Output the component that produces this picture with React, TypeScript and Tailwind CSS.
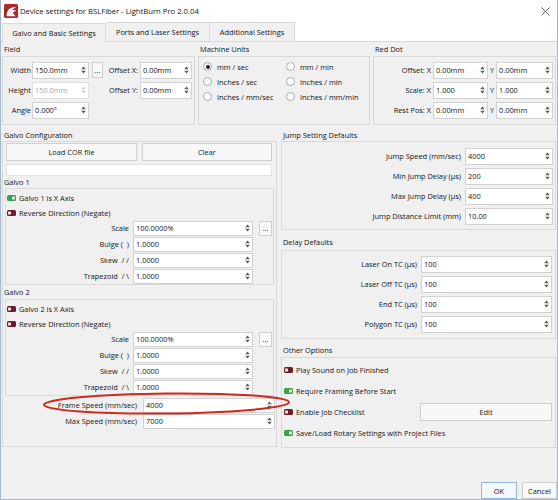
import React from "react";

const Spin = ({ dis }: { dis?: boolean }) => (
  <svg width="7" height="10" viewBox="0 0 7 10" className="shrink-0">
    <path d="M1.2 4.2 L3.5 1.6 L5.8 4.2 Z M1.2 5.8 L3.5 8.4 L5.8 5.8 Z" fill={dis ? "#c8c8c8" : "#5c5c5c"} />
  </svg>
);

const Input = ({ v, cls, dis }: { v: string; cls: string; dis?: boolean }) => (
  <div
    className={`${cls} shrink-0 flex items-center bg-white border ${dis ? "border-[#e0e0e0] text-[#a8a8a8]" : "border-[#d2d2d2]"} pl-[2px] pr-[1px]`}
  >
    <span className="flex-1 whitespace-nowrap leading-[10px]">{v}</span>
    <Spin dis={dis} />
  </div>
);

const Toggle = ({ on }: { on?: boolean }) => (
  <svg width="9" height="6" viewBox="0 0 9 6" className="shrink-0">
    <rect x="0" y="0" width="9" height="6" rx="1.5" fill={on ? "#3f9f47" : "#6e1d27"} />
    <rect x={on ? 5 : 1} y="1.5" width="3" height="3" rx="0.6" fill="#e6e6e6" />
  </svg>
);

const Radio = ({ checked }: { checked?: boolean }) => (
  <span className="w-[9px] h-[9px] shrink-0 rounded-full border border-[#a9a9a9] bg-white flex items-center justify-center">
    {checked && <span className="w-[4px] h-[4px] rounded-full bg-[#1e1e1e]" />}
  </span>
);

const Btn = ({ label, cls }: { label: string; cls: string }) => (
  <div className={`${cls} shrink-0 flex items-center justify-center bg-[#f8f8f8] border border-[#d0d0d0] leading-[10px]`}>{label}</div>
);

const GalvoRow = ({ label, v, dots }: { label: string; v: string; dots?: boolean }) => (
  <div className="h-[16px] flex items-center">
    <span className="w-[123px] text-right whitespace-nowrap leading-[10px]">{label}</span>
    <Input v={v} cls="ml-[4px] w-[120px] h-[15px]" />
    {dots && <Btn label="..." cls="ml-[6px] w-[13px] h-[15px]" />}
  </div>
);

const ToggleRow = ({ on, label }: { on?: boolean; label: string }) => (
  <div className="h-[15px] flex items-center pl-[1px]">
    <Toggle on={on} />
    <span className="ml-[3px] leading-[10px]">{label}</span>
  </div>
);

const GalvoBox = ({ n, xOn }: { n: string; xOn?: boolean }) => (
  <div className="ml-[2px] w-[269px] h-[97px] border border-[#d9d9d9] pt-[1px]">
    <ToggleRow on={xOn} label={`Galvo ${n} is X Axis`} />
    <ToggleRow label="Reverse Direction (Negate)" />
    <GalvoRow label="Scale" v="100.0000%" dots />
    <GalvoRow label={"Bulge (\u00a0\u00a0)"} v="1.0000" />
    <GalvoRow label={"Skew\u00a0\u00a0/\u00a0/"} v="1.0000" />
    <GalvoRow label={"Trapezoid\u00a0\u00a0/\u00a0\\"} v="1.0000" />
  </div>
);

const RightRow = ({ label, v, lw, iw }: { label: string; v: string; lw: string; iw: string }) => (
  <div className="h-[18px] flex items-center">
    <span className={`${lw} text-right whitespace-nowrap leading-[10px]`}>{label}</span>
    <Input v={v} cls={`ml-[4px] ${iw} h-[17px]`} />
  </div>
);

const OtherRow = ({ on, label, children }: { on?: boolean; label: string; children?: React.ReactNode }) => (
  <div className="h-[21px] flex items-center pl-[2px]">
    <Toggle on={on} />
    <span className="ml-[3px] whitespace-nowrap leading-[10px]">{label}</span>
    {children}
  </div>
);

export default function App() {
  return (
    <div className="relative w-[558px] h-[500px] overflow-hidden flex flex-col bg-[#f0f0f0] border-x border-b border-[#a3b9d0] font-['Open_Sans',sans-serif] text-[7.4px] leading-[10px] text-[#151515]">
      {/* Title bar */}
      <div className="h-[22px] shrink-0 bg-white flex items-center pl-[3px]">
        <svg width="14" height="14" viewBox="0 0 14 14" className="shrink-0">
          <rect x="0" y="0" width="14" height="14" rx="1.5" fill="#b2262c" />
          <path
            d="M2.8 12.2 C2.2 8 4.4 4.4 8.4 3.4 C10.6 2.9 12.4 3.8 12.4 3.8 C10.2 3.9 8.8 4.9 8.3 6.3 C9.8 5.7 11.6 6.2 12.2 7.4 C10.6 7.2 9.3 7.9 9 9.2 L11.6 12.2 Z"
            fill="#ffffff"
          />
        </svg>
        <span className="ml-[2px] text-[7.7px] whitespace-nowrap">Device settings for BSLFiber - LightBurn Pro 2.0.04</span>
        <svg width="9" height="9" viewBox="0 0 9 9" className="ml-auto mr-[7px]">
          <path d="M0.5 0.5 L8.5 8.5 M8.5 0.5 L0.5 8.5" stroke="#444" strokeWidth="0.8" />
        </svg>
      </div>

      {/* Tabs */}
      <div className="h-[20px] shrink-0 bg-white flex items-end pl-[1px] border-b border-[#d9d9d9]">
        <div className="h-[19px] w-[104px] -mb-px bg-[#f0f0f0] border border-b-0 border-[#d9d9d9] flex items-center justify-center whitespace-nowrap">
          Galvo and Basic Settings
        </div>
        <div className="h-[19px] w-[104px] bg-[#f0f0f0] border-t border-r border-[#d9d9d9] flex items-center justify-center whitespace-nowrap">
          Ports and Laser Settings
        </div>
        <div className="h-[19px] w-[85px] bg-[#f0f0f0] border-t border-r border-[#d9d9d9] flex items-center justify-center whitespace-nowrap">
          Additional Settings
        </div>
      </div>

      {/* Content */}
      <div className="flex-1 flex flex-col pl-[1px]">
        {/* Top row */}
        <div className="flex gap-[3px]">
          {/* Field */}
          <div className="w-[193px]">
            <div className="h-[14px] flex items-center pl-[2px]">Field</div>
            <div className="h-[69px] border border-[#d9d9d9] pt-[4px] flex flex-col gap-[2px]">
              <div className="h-[18px] flex items-center">
                <span className="w-[28px] text-right">Width</span>
                <Input v="150.0mm" cls="ml-[1px] w-[57px] h-[17px]" />
                <Btn label="..." cls="ml-[3px] w-[11px] h-[16px]" />
                <span className="w-[35px] text-right whitespace-nowrap">Offset X:</span>
                <Input v="0.00mm" cls="ml-[2px] w-[52px] h-[17px]" />
              </div>
              <div className="h-[18px] flex items-center">
                <span className="w-[28px] text-right">Height</span>
                <Input v="150.0mm" cls="ml-[1px] w-[57px] h-[17px]" dis />
                <span className="ml-[3px] w-[11px]" />
                <span className="w-[35px] text-right whitespace-nowrap">Offset Y:</span>
                <Input v="0.00mm" cls="ml-[2px] w-[52px] h-[17px]" />
              </div>
              <div className="h-[18px] flex items-center">
                <span className="w-[28px] text-right">Angle</span>
                <Input v="0.000°" cls="ml-[1px] w-[57px] h-[17px]" />
              </div>
            </div>
          </div>

          {/* Machine Units */}
          <div className="w-[172px]">
            <div className="h-[14px] flex items-center pl-[2px]">Machine Units</div>
            <div className="h-[69px] border border-[#d9d9d9] pt-[2px] pl-[4px] grid grid-cols-[83px_1fr] auto-rows-[15px]">
              <div className="flex items-center gap-[5px]"><Radio checked />mm / sec</div>
              <div className="flex items-center gap-[5px]"><Radio />mm / min</div>
              <div className="flex items-center gap-[5px]"><Radio />Inches / sec</div>
              <div className="flex items-center gap-[5px]"><Radio />Inches / min</div>
              <div className="flex items-center gap-[5px] whitespace-nowrap"><Radio />Inches / mm/sec</div>
              <div className="flex items-center gap-[5px] whitespace-nowrap"><Radio />Inches / mm/min</div>
            </div>
          </div>

          {/* Red Dot */}
          <div className="w-[183px]">
            <div className="h-[14px] flex items-center pl-[2px]">Red Dot</div>
            <div className="h-[69px] border border-[#d9d9d9] pt-[4px] flex flex-col gap-[2px]">
              {[
                ["Offset: X", "0.00mm", "0.00mm"],
                ["Scale: X", "1.000", "1.000"],
                ["Rest Pos: X", "0.00mm", "0.00mm"],
              ].map(([l, a, b]) => (
                <div key={l} className="h-[18px] flex items-center">
                  <span className="w-[57px] text-right whitespace-nowrap">{l}</span>
                  <Input v={a} cls="ml-[2px] w-[55px] h-[17px]" />
                  <span className="w-[8px] text-center">Y</span>
                  <Input v={b} cls="w-[57px] h-[17px]" />
                </div>
              ))}
            </div>
          </div>
        </div>

        {/* Second row */}
        <div className="mt-[3px] flex gap-[4px] items-start">
          {/* Left column */}
          <div className="w-[275px]">
            <div className="h-[13px] flex items-center pl-[2px]">Galvo Configuration</div>
            <div className="h-[306px] border border-[#d9d9d9] pt-[1px]">
              <div className="flex gap-[5px] px-[3px]">
                <Btn label="Load COR file" cls="w-[131px] h-[18px]" />
                <Btn label="Clear" cls="w-[130px] h-[18px]" />
              </div>
              <div className="ml-[3px] mt-[3px] w-[266px] h-[12px] bg-white border border-[#e2e2e2]" />
              <div className="h-[12px] flex items-center pl-[1px]">Galvo 1</div>
              <GalvoBox n="1" xOn />
              <div className="h-[14px] flex items-center pl-[1px]">Galvo 2</div>
              <GalvoBox n="2" />
              <div className="mt-[1px] h-[16px] flex items-center">
                <span className="w-[134px] text-right whitespace-nowrap">Frame Speed (mm/sec)</span>
                <Input v="4000" cls="ml-[6px] w-[132px] h-[15px]" />
              </div>
              <div className="h-[16px] flex items-center">
                <span className="w-[134px] text-right whitespace-nowrap">Max Speed (mm/sec)</span>
                <Input v="7000" cls="ml-[6px] w-[132px] h-[15px]" />
              </div>
            </div>
          </div>

          {/* Right column */}
          <div className="w-[275px]">
            <div className="h-[13px] flex items-center pl-[2px]">Jump Setting Defaults</div>
            <div className="h-[89px] border border-[#d9d9d9] pt-[5px] flex flex-col gap-[2px]">
              <RightRow label="Jump Speed (mm/sec)" v="4000" lw="w-[179px]" iw="w-[88px]" />
              <RightRow label="Min Jump Delay (µs)" v="200" lw="w-[179px]" iw="w-[88px]" />
              <RightRow label="Max Jump Delay (µs)" v="400" lw="w-[179px]" iw="w-[88px]" />
              <RightRow label="Jump Distance Limit (mm)" v="10.00" lw="w-[179px]" iw="w-[88px]" />
            </div>

            <div className="mt-[3px] h-[17px] flex items-center pl-[2px]">Delay Defaults</div>
            <div className="h-[89px] border border-[#d9d9d9] pt-[4px] flex flex-col gap-[2px]">
              <RightRow label="Laser On TC (µs)" v="100" lw="w-[135px]" iw="w-[131px]" />
              <RightRow label="Laser Off TC (µs)" v="100" lw="w-[135px]" iw="w-[131px]" />
              <RightRow label="End TC (µs)" v="100" lw="w-[135px]" iw="w-[131px]" />
              <RightRow label="Polygon TC (µs)" v="100" lw="w-[135px]" iw="w-[131px]" />
            </div>

            <div className="mt-[3px] h-[15px] flex items-center pl-[2px]">Other Options</div>
            <div className="h-[91px] border border-[#d9d9d9] pt-[1px]">
              <OtherRow label="Play Sound on Job Finished" />
              <OtherRow on label="Require Framing Before Start" />
              <OtherRow label="Enable Job Checklist">
                <Btn label="Edit" cls="ml-auto mr-[3px] w-[132px] h-[18px]" />
              </OtherRow>
              <OtherRow on label="Save/Load Rotary Settings with Project Files" />
            </div>
          </div>
        </div>

        {/* Bottom buttons */}
        <div className="flex-1 flex items-end justify-end gap-[5px]">
          <div className="w-[36px] h-[17px] flex items-center justify-center bg-[#f4f8fc] border border-[#8fb8e3]">OK</div>
          <div className="w-[35px] h-[17px] flex items-center justify-center bg-[#f8f8f8] border border-[#cfcfcf]">Cancel</div>
        </div>
      </div>

      {/* Red annotation ellipse */}
      <svg className="absolute left-0 top-0 pointer-events-none" width="558" height="500" viewBox="0 0 558 500">
        <ellipse cx="165.5" cy="403.5" rx="122.5" ry="10" fill="none" stroke="#cc2b20" strokeWidth="2" transform="rotate(-0.6 165.5 403.5)" />
      </svg>
    </div>
  );
}
